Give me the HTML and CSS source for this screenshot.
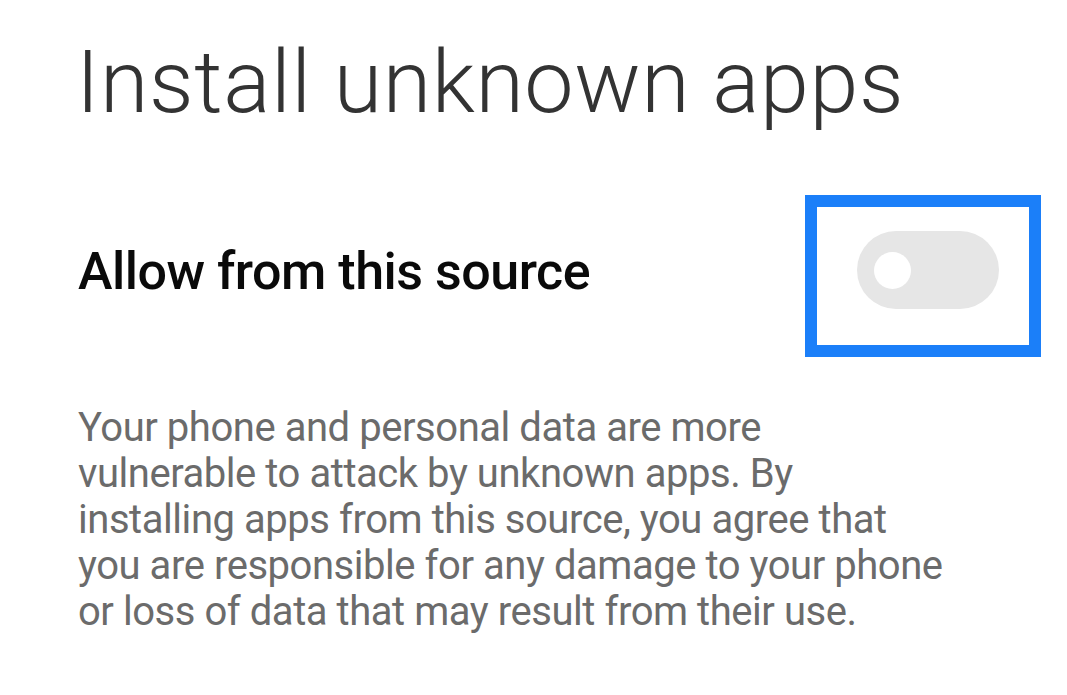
FILE: index.html
```html
<!DOCTYPE html>
<html lang="en">
  <head>
    <meta charset="UTF-8" />
    <meta name="viewport" content="width=device-width, initial-scale=1.0" />
    <title>Install unknown apps</title>
    <link rel="stylesheet" href="styles.css">
  </head>
  <body>
    <div class="screen">
      <h1 class="page-title">Install unknown apps</h1>

      <div class="setting-row">
        <span class="setting-label">Allow from this source</span>
        <div class="toggle-frame">
          <div class="toggle">
            <span class="toggle-knob"></span>
          </div>
        </div>
      </div>

      <p class="warning">
        Your phone and personal data are more<br />
        vulnerable to attack by unknown apps. By<br />
        installing apps from this source, you agree that<br />
        you are responsible for any damage to your phone<br />
        or loss of data that may result from their use.
      </p>
    </div>
  </body>
</html>
```

FILE: styles.css
```css
body {
  margin: 0;
  background-color: #fff;
  font-family: Roboto, "Liberation Sans", sans-serif;
}
.screen {
  display: flex;
  flex-direction: column;
  padding: 32px 26px 0 76px;
}
.page-title {
  margin: 0;
  font-size: 88px;
  font-weight: 300;
  line-height: 100px;
  letter-spacing: 0.6px;
  color: #333;
}
.setting-row {
  display: flex;
  justify-content: space-between;
  align-items: center;
  margin-top: 63px;
}
.setting-label {
  font-size: 52px;
  font-weight: 500;
  line-height: 60px;
  letter-spacing: -0.5px;
  color: #0a0a0a;
  padding-left: 2px;
  padding-bottom: 8px;
}
.toggle-frame {
  width: 212px;
  height: 138px;
  border: 12px solid #1b7ff9;
  display: flex;
  align-items: center;
  justify-content: center;
}
.toggle {
  width: 142px;
  height: 78px;
  margin: 0 0 12px 10px;
  border-radius: 39px;
  background-color: #e6e6e6;
  display: flex;
  align-items: center;
}
.toggle-knob {
  width: 37px;
  height: 37px;
  margin-left: 17px;
  border-radius: 50%;
  background-color: #fff;
}
.warning {
  margin: 48px 0 0 2px;
  white-space: nowrap;
  font-size: 40px;
  line-height: 46px;
  letter-spacing: -0.45px;
  color: #6b6b6b;
}
```
